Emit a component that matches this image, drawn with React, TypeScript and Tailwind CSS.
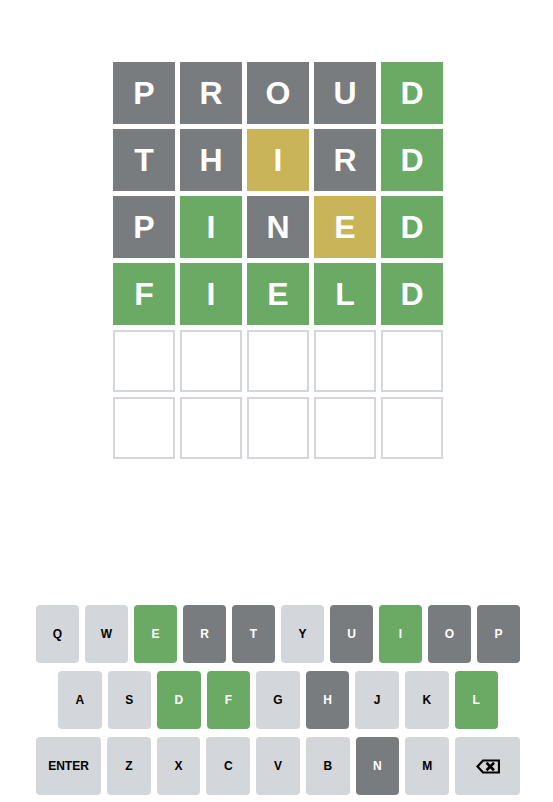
const guesses: { word: string; marks: string }[] = [
  { word: "PROUD", marks: "xxxxg" },
  { word: "THIRD", marks: "xxyxg" },
  { word: "PINED", marks: "xgxyg" },
  { word: "FIELD", marks: "ggggg" },
];

const tileColor: Record<string, string> = {
  g: "bg-[#6aaa64]",
  y: "bg-[#c9b458]",
  x: "bg-[#787c7e]",
};

// key states: g = correct, x = absent, anything missing = unused
const keyState: Record<string, string> = {
  E: "g", I: "g", D: "g", F: "g", L: "g",
  R: "x", T: "x", U: "x", O: "x", P: "x", H: "x", N: "x",
};

const keyColor: Record<string, string> = {
  g: "bg-[#6aaa64] text-white",
  x: "bg-[#787c7e] text-white",
  u: "bg-[#d3d6da] text-black",
};

function BackspaceIcon() {
  return (
    <svg width="24" height="15" viewBox="0 0 24 15" fill="none" stroke="currentColor" strokeWidth="2.2">
      <path d="M7 1.5H23V13.5H7L1.5 7.5Z" strokeLinejoin="miter" />
      <line x1="10.5" y1="3.8" x2="18" y2="11.2" strokeWidth="2.6" />
      <line x1="18" y1="3.8" x2="10.5" y2="11.2" strokeWidth="2.6" />
    </svg>
  );
}

function Key({ k, wide }: { k: string; wide?: boolean }) {
  const state = keyState[k] ?? "u";
  return (
    <button
      className={`h-[58px] rounded-[4px] flex items-center justify-center text-[12px] font-bold ${
        wide ? "w-[65px] flex-none" : "flex-1"
      } ${keyColor[state]}`}
    >
      {k === "BACK" ? <BackspaceIcon /> : k}
    </button>
  );
}

export default function App() {
  const rows = [...guesses, null, null];
  return (
    <div
      className="h-screen flex flex-col items-center bg-white pl-[3px]"
      style={{ fontFamily: '"Liberation Sans", Arial, sans-serif' }}
    >
      {/* Board */}
      <div className="mt-[62px] flex flex-col gap-[5px]">
        {rows.map((row, i) => (
          <div key={i} className="flex gap-[5px]">
            {[0, 1, 2, 3, 4].map((j) =>
              row ? (
                <div
                  key={j}
                  className={`w-[62px] h-[62px] flex items-center justify-center text-white text-[32px] font-bold ${tileColor[row.marks[j]]}`}
                >
                  {row.word[j]}
                </div>
              ) : (
                <div key={j} className="w-[62px] h-[62px] border-2 border-[#d3d6da]" />
              )
            )}
          </div>
        ))}
      </div>

      <div className="flex-1" />

      {/* Keyboard */}
      <div className="w-[484px] flex flex-col gap-[8px] pb-[7px]">
        <div className="flex gap-[6px]">
          {"QWERTYUIOP".split("").map((k) => (
            <Key key={k} k={k} />
          ))}
        </div>
        <div className="flex gap-[6px] px-[22px]">
          {"ASDFGHJKL".split("").map((k) => (
            <Key key={k} k={k} />
          ))}
        </div>
        <div className="flex gap-[6px]">
          <Key k="ENTER" wide />
          {"ZXCVBNM".split("").map((k) => (
            <Key key={k} k={k} />
          ))}
          <Key k="BACK" wide />
        </div>
      </div>
    </div>
  );
}
